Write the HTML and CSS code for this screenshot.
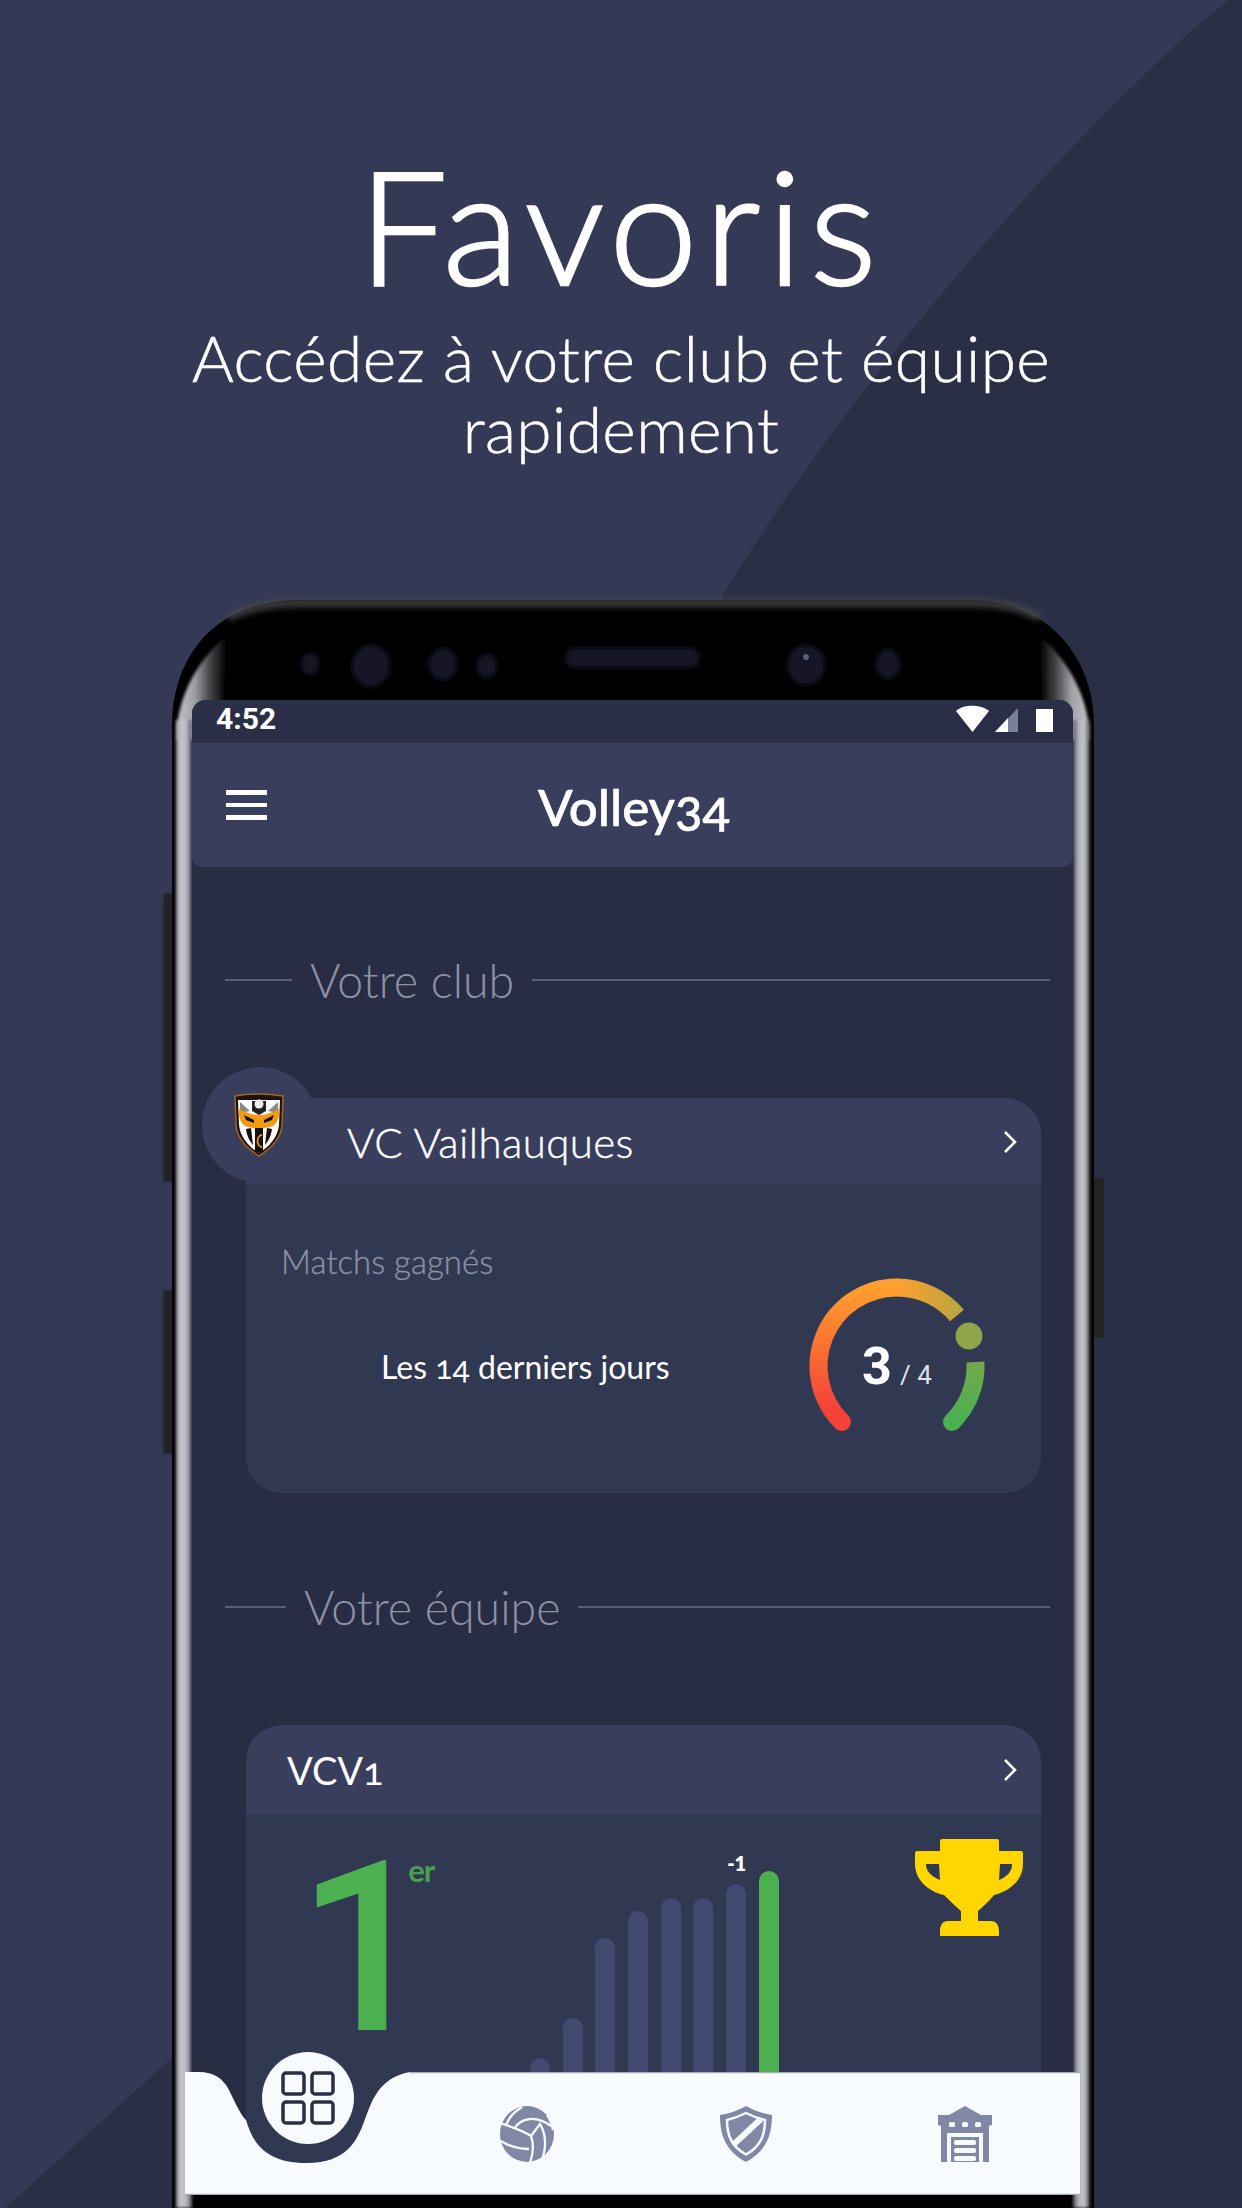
FILE: index.html
```html
<!DOCTYPE html>
<html lang="fr">
<head>
<meta charset="utf-8">
<title>Favoris</title>
<link rel="stylesheet" href="styles.css">
</head>
<body>
<div class="page">
  <svg class="backdrop" viewBox="0 0 1242 2208" aria-hidden="true">
    <path class="backdrop-dark" d="M1228 0C1110 95 880 340 725 591L172 2058L5 2208H1242V0Z"/>
  </svg>

  <header class="hero">
    <h1 class="hero-title">Favoris</h1>
    <p class="hero-sub">Accédez à votre club et équipe<br>rapidement</p>
  </header>

  <div class="phone">
    <svg class="phone-frame" viewBox="160 590 950 1618" aria-hidden="true">
      <defs>
        <filter id="soft" x="-20%" y="-5%" width="140%" height="110%"><feGaussianBlur stdDeviation="1.6"/></filter>
        <filter id="softer" x="-20%" y="-20%" width="140%" height="140%"><feGaussianBlur stdDeviation="2.5"/></filter>
        <filter id="band" x="-5%" y="-100%" width="110%" height="300%"><feGaussianBlur stdDeviation="3"/></filter>
        <linearGradient id="silver-l" gradientUnits="userSpaceOnUse" x1="176" y1="0" x2="192" y2="0">
          <stop offset="0" stop-color="#8d8d96"/><stop offset=".3" stop-color="#c6c6cc"/><stop offset=".65" stop-color="#b8b8c0"/><stop offset="1" stop-color="#4d5164"/>
        </linearGradient>
        <linearGradient id="silver-r" gradientUnits="userSpaceOnUse" x1="1073" y1="0" x2="1090" y2="0">
          <stop offset="0" stop-color="#4d5164"/><stop offset=".35" stop-color="#b8b8c2"/><stop offset=".7" stop-color="#c2c2ca"/><stop offset="1" stop-color="#2c2c33"/>
        </linearGradient>
        <linearGradient id="wedge-l" gradientUnits="userSpaceOnUse" x1="180" y1="0" x2="226" y2="0">
          <stop offset="0" stop-color="#bcbcc4"/><stop offset=".3" stop-color="#a2a2aa"/><stop offset=".65" stop-color="#45454a"/><stop offset="1" stop-color="#000"/>
        </linearGradient>
        <linearGradient id="wedge-r" gradientUnits="userSpaceOnUse" x1="1040" y1="0" x2="1086" y2="0">
          <stop offset="0" stop-color="#000"/><stop offset=".35" stop-color="#45454a"/><stop offset=".7" stop-color="#a2a2aa"/><stop offset="1" stop-color="#bcbcc4"/>
        </linearGradient>
      </defs>
      <rect class="side-key" x="163" y="893" width="12" height="289" rx="3" filter="url(#soft)"/>
      <rect class="side-key" x="163" y="1290" width="12" height="164" rx="3" filter="url(#soft)"/>
      <rect class="side-key" x="1090" y="1178" width="14" height="160" rx="3"/>
      <path class="shell" d="M172 2208V725C172 660 212 600 300 600H970C1050 600 1094 660 1094 725V2208Z"/>
      <path class="shell-band" filter="url(#band)" d="M228 618C248 607 270 603 300 603H970C1000 603 1022 607 1040 618"/>
      <path fill="url(#wedge-l)" filter="url(#soft)" d="M177 730C179 690 205 645 245 624C228 650 222 680 224 705V740H177Z"/>
      <path fill="url(#wedge-r)" filter="url(#soft)" d="M1089 730C1087 690 1060 645 1022 624C1038 650 1044 680 1042 705V740H1089Z"/>
      <path fill="url(#silver-l)" filter="url(#soft)" d="M176 2208V720H192V2208Z"/>
      <path fill="url(#silver-r)" filter="url(#soft)" d="M1090 2208V720H1073V2208Z"/>
      <g class="sensors" filter="url(#softer)">
        <ellipse cx="310" cy="664" rx="9" ry="11"/>
        <ellipse cx="371" cy="666" rx="19" ry="21"/>
        <ellipse cx="443" cy="664" rx="14" ry="16"/>
        <ellipse cx="487" cy="666" rx="10" ry="12"/>
        <rect x="565" y="648" width="135" height="20" rx="10"/>
        <ellipse cx="806" cy="665" rx="19" ry="20"/>
        <ellipse cx="888" cy="664" rx="12" ry="15"/>
      </g>
      <circle cx="806" cy="657" r="3" fill="#59607a"/>
    </svg>

    <div class="screen">
      <div class="status-bar">
        <span class="status-time">4:52</span>
        <svg class="status-icons" viewBox="0 0 100 28" aria-hidden="true">
          <path class="st-white" d="M3 6C10-1 28-1 36 6L19.500 27Z"/>
          <path class="st-dim" d="M65 3V27H42Z"/>
          <path class="st-white" d="M55 13V27H42Z"/>
          <path class="st-white" d="M83 4H100V27H83Z"/>
        </svg>
      </div>

      <div class="app-bar">
        <span class="burger"><i></i><i></i><i></i></span>
        <span class="app-title">Volley<span class="onum">34</span></span>
      </div>

      <main class="content">
        <div class="section-head section-head--club"><span class="rule rule--short"></span><h2>Votre club</h2><span class="rule"></span></div>

        <section class="card">
          <div class="avatar">
            <svg class="club-logo" viewBox="0 0 50 64" aria-hidden="true">
              <path fill="#1a1310" stroke="#a8641f" stroke-width="1.500" d="M1 3Q25 -1 49 3L48 32C47 46 36 56 25 63C14 56 3 46 2 32Z"/>
              <path fill="#fff" d="M4 7H46L45 32C44 44 35 54 25 60C15 54 6 44 5 32Z"/>
              <path fill="#8a8a8a" d="M6 9L16 18L6 20ZM44 9L34 18L44 20Z"/>
              <path fill="#222" d="M18 8H32V18L25 22L18 18Z"/>
              <circle cx="25" cy="11" r="4.500" fill="#eee"/>
              <path fill="#f39a12" d="M5 16C12 19 17 22 25 22C33 22 38 19 45 16C46 26 42 33 36 34L25 36L14 34C8 33 4 26 5 16Z"/>
              <path fill="#111" d="M10 22L20 27L20 30L12 27ZM40 22L30 27L30 30L38 27Z"/>
              <path fill="#111" d="M12 36L17 35L19 52C15 47 13 43 12 36ZM38 36L33 35L31 52C35 47 37 43 38 36Z"/>
              <path fill="#111" d="M21 35H29V58L25 60L21 58Z"/>
              <path fill="none" stroke="#e88f18" stroke-width="1.800" d="M28 42A4.500 6 0 1 0 28 54"/>
            </svg>
          </div>
          <div class="card-head card-head--club">
            <h3>VC Vailhauques</h3>
            <svg class="chevron" viewBox="0 0 14 24" aria-hidden="true"><path d="M2 2L12 12L2 22"/></svg>
          </div>
          <div class="club-body">
            <p class="club-label">Matchs gagnés</p>
            <div class="club-row">
              <span class="club-period">Les <span class="onum">14</span> derniers jours</span>
              <svg class="gauge" viewBox="0 0 200 178" role="img" aria-label="3 sur 4">
                <defs>
                  <linearGradient id="g-left" gradientUnits="userSpaceOnUse" x1="0" y1="130" x2="0" y2="10">
                    <stop offset="0" stop-color="#f44336"/><stop offset="1" stop-color="#ff9f2e"/>
                  </linearGradient>
                  <linearGradient id="g-top" gradientUnits="userSpaceOnUse" x1="100" y1="0" x2="160" y2="0">
                    <stop offset="0" stop-color="#ff9f2e"/><stop offset="1" stop-color="#bda63e"/>
                  </linearGradient>
                  <linearGradient id="g-right" gradientUnits="userSpaceOnUse" x1="0" y1="85" x2="0" y2="140">
                    <stop offset="0" stop-color="#74a94c"/><stop offset="1" stop-color="#4caf50"/>
                  </linearGradient>
                </defs>
                <path class="arc arc--round" stroke="url(#g-left)" d="M45 145A78.500 78.500 0 0 1 100 10.500"/>
                <path class="arc" stroke="url(#g-top)" d="M100 10.500A78.500 78.500 0 0 1 160 38.500"/>
                <path class="arc" stroke="url(#g-right)" d="M178.500 85A78.500 78.500 0 0 1 155 145"/>
                <circle cx="155" cy="145" r="9" fill="#4caf50"/>
                <circle cx="172" cy="59" r="13.500" fill="#8ea34a"/>
                <text class="gauge-main" x="65" y="107">3</text>
                <text class="gauge-sub" x="103" y="107">/ 4</text>
              </svg>
            </div>
          </div>
        </section>

        <div class="section-head section-head--team"><span class="rule rule--shorter"></span><h2>Votre équipe</h2><span class="rule"></span></div>

        <section class="card card--team">
          <div class="card-head card-head--team">
            <h3>VCV<span class="onum onum--one">1</span></h3>
            <svg class="chevron" viewBox="0 0 14 24" aria-hidden="true"><path d="M2 2L12 12L2 22"/></svg>
          </div>
          <div class="team-body">
            <div class="rank"><span class="rank-num">1</span><span class="rank-suffix">er</span></div>
            <div class="bars">
              <span class="bar" style="height:42px"></span>
              <span class="bar" style="height:82px"></span>
              <span class="bar" style="height:162px"></span>
              <span class="bar" style="height:189px"></span>
              <span class="bar" style="height:202px"></span>
              <span class="bar" style="height:202px"></span>
              <span class="bar" style="height:216px"><b class="bar-tag">-1</b></span>
              <span class="bar bar--now" style="height:229px"></span>
            </div>
            <svg class="trophy" viewBox="0 0 108 98" aria-hidden="true">
              <path fill-rule="evenodd" d="M25 2Q25 0 27 0H82Q84 0 84 2V12H106Q108 12 108 14V25C108 40 96 52 79 56C76 60 72 64 63 72V82H76C81 82 84 86 84 92V97H25V92C25 86 28 82 33 82H46V72C37 64 33 60 29 56C12 52 0 40 0 25V14Q0 12 2 12H25ZM11 25V26C11 32 17 38 25 41L24 25ZM97 25H85L84 41C92 38 97 32 97 26Z"/>
            </svg>
          </div>
        </section>
      </main>
    </div>

    <nav class="tabbar">
      <svg class="tabbar-shape" viewBox="0 0 895 123" preserveAspectRatio="none" aria-hidden="true">
        <path d="M0 0H14C28 0 38 6 44 18C50 30 55 42 61 48C67 68 78 91 122 91C162 91 172 68 179 50C186 32 192 6 225 0H895V123H0Z"/>
        <path class="tabbar-edge" d="M225 .5H895M0 122.500H895"/>
      </svg>
      <div class="tab tab--active">
        <span class="tab-disc">
          <svg class="tab-grid" viewBox="0 0 54 54" aria-hidden="true">
            <rect x="2" y="2" width="21" height="21" rx="3"/><rect x="31" y="2" width="21" height="21" rx="3"/>
            <rect x="2" y="31" width="21" height="21" rx="3"/><rect x="31" y="31" width="21" height="21" rx="3"/>
          </svg>
        </span>
      </div>
      <div class="tab">
        <svg class="tab-icon" viewBox="0 0 54 56" aria-hidden="true">
          <ellipse class="i-fill" cx="27" cy="28" rx="27" ry="28"/>
          <g class="i-seam">
            <path d="M0 17C12 21 22 24 31 30"/>
            <path d="M1 35C10 41 20 43 29 43"/>
            <path d="M31 30C34 38 33 48 30 57"/>
            <path d="M31 30C34 26 37 22 40 18C46 28 47 42 41 56"/>
            <path d="M14 23C20 13 34 8 51 20"/>
            <path d="M6 19C10 10 14 6 22 1"/>
            <path d="M47 9C50 13 52 18 53 24"/>
          </g>
        </svg>
      </div>
      <div class="tab">
        <svg class="tab-icon" viewBox="0 0 54 56" aria-hidden="true">
          <path class="i-fill" d="M27 0Q39 7 53 9C53 30 47 45 27 56C7 45 1 30 1 9Q15 7 27 0Z"/>
          <path class="i-line" d="M27 7Q37 12 46 14C46 30 41 41 27 48.500C13 41 8 30 8 14Q17 12 27 7Z"/>
          <path class="i-line i-line--wide" d="M42 13L14 39"/>
        </svg>
      </div>
      <div class="tab">
        <svg class="tab-icon" viewBox="0 0 54 56" aria-hidden="true">
          <path class="i-fill" d="M27 0L43 9H54V19L51 20V56H3V20L0 19V9H11Z"/>
          <g class="i-white">
            <rect x="11" y="16" width="6" height="5" rx="1.500"/><rect x="24" y="16" width="6" height="5" rx="1.500"/><rect x="37" y="16" width="6" height="5" rx="1.500"/>
            <path d="M9 27H45V56H41V31H13V56H9Z"/>
            <rect x="16" y="34" width="22" height="5" rx="2"/><rect x="16" y="42" width="22" height="5" rx="2"/><rect x="16" y="50" width="22" height="5" rx="2"/>
          </g>
        </svg>
      </div>
    </nav>
  </div>
</div>
</body>
</html>
```
FILE: styles.css
```css
* { box-sizing: border-box; }
html, body { margin: 0; padding: 0; }
body { background: #343a56; font-family: "Lato", "Open Sans", sans-serif; color: #fff; }

.page { position: relative; width: 1242px; height: 2208px; overflow: hidden; background: #343a56; }
.backdrop { position: absolute; inset: 0; width: 1242px; height: 2208px; }
.backdrop-dark { fill: #2a2f45; }

.hero { position: relative; height: 597px; padding-top: 134px; text-align: center; }
.hero-title { margin: 0; font-size: 158px; line-height: 180px; font-weight: 300; letter-spacing: 7px; -webkit-text-stroke: 2.5px #fff; }
.hero-sub { margin: 8px 0 0; font-size: 64px; line-height: 71px; font-weight: 300; letter-spacing: .4px; -webkit-text-stroke: .5px #fff; }

.phone { position: relative; width: 919px; height: 1611px; margin-left: 172px; padding: 103px 18px 13px 20px; }
.phone-frame { position: absolute; left: -12px; top: -7px; width: 950px; height: 1618px; }
.side-key { fill: #232325; }
.shell { fill: #000; }
.shell-band { fill: none; stroke: #46464a; stroke-width: 7; }
.sensors { fill: #151926; }

.screen { position: relative; height: 1495px; overflow: hidden; background: #282d43; border-radius: 14px 14px 0 0; display: flex; flex-direction: column; }

.status-bar { flex: none; height: 43px; background: #2a2f47; display: flex; align-items: center; justify-content: space-between; padding: 0 20px 0 24px; }
.status-time { font: 700 30px/1 "Roboto", sans-serif; margin-bottom: 6px; }
.status-icons { width: 100px; height: 28px; margin-bottom: 6px; }
.st-white { fill: #fff; }
.st-dim { fill: #7b8097; }

.app-bar { flex: none; height: 124px; background: #383e5c; border-radius: 0 0 10px 10px; display: flex; align-items: center; padding-left: 34px; position: relative; }
.burger { display: flex; flex-direction: column; gap: 8px; width: 41px; }
.burger i { display: block; height: 4.500px; background: #fff; }
.app-title { flex: 1; text-align: center; font-size: 51px; font-weight: 500; margin-right: 72px; margin-top: 2px; -webkit-text-stroke: .6px #fff; }
.onum { font-feature-settings: "onum"; font-variant-numeric: oldstyle-nums; }

.content { flex: 1; padding: 83px 32px 0 33px; }
.section-head { display: flex; align-items: center; gap: 18px; height: 60px; }
.section-head h2 { margin: 0; font-size: 46.500px; line-height: 60px; font-weight: 300; color: #8d92a6; white-space: nowrap; }
.section-head--club { margin-bottom: 88px; margin-right: -9px; }
.section-head--team { margin-top: 84px; margin-bottom: 88px; margin-right: -9px; }
.rule { flex: 1; height: 2px; background: #5a5f76; }
.rule--short { flex: none; width: 67px; }
.rule--shorter { flex: none; width: 61px; }

.card { position: relative; margin-left: 21px; border-radius: 36px; background: #313852; }
.card--team { height: 640px; overflow: hidden; }
.card-head { background: #383e5c; border-radius: 36px 36px 0 0; display: flex; align-items: center; justify-content: space-between; padding-right: 24px; }
.card-head h3 { margin: 0; font-size: 38px; font-weight: 400; }
.card-head--club { height: 87px; padding-left: 101px; position: relative; }
.card-head--club h3 { font-size: 42px; letter-spacing: .4px; font-weight: 300; -webkit-text-stroke: .4px #fff; }
.card-head--team { height: 89px; padding-left: 41px; }
.chevron { width: 14px; height: 24px; fill: none; stroke: #fff; stroke-width: 2.500; }

.avatar { position: absolute; z-index: 1; left: -44px; top: -31px; width: 116px; height: 116px; border-radius: 50%; background: #383e5c; display: flex; align-items: center; justify-content: center; padding: 0 2px 0 0; }
.club-logo { width: 50px; height: 64px; }

.club-body { height: 308px; padding-top: 62px; }
.club-label { margin: 0; padding-left: 35px; font-size: 33px; line-height: 28px; font-weight: 300; color: #8d92a6; -webkit-text-stroke: .3px #8d92a6; margin-bottom: 2px; }
.club-row { display: flex; align-items: center; padding: 0 44px 0 135px; justify-content: space-between; }
.club-period { font-size: 32px; white-space: nowrap; }
.gauge { width: 200px; height: 178px; flex: none; }
.arc { fill: none; stroke-width: 18; }
.arc--round { stroke-linecap: round; }
.gauge-main { font: 700 52px "Roboto", sans-serif; fill: #fff; }
.gauge-sub { font: 400 26px "Roboto", sans-serif; fill: #dfe1e8; }

.team-body { display: flex; align-items: flex-start; height: 551px; }
.rank { flex: none; width: 284px; display: flex; align-items: flex-start; padding-left: 51px; }
.rank-num { flex: none; letter-spacing: -24px; font: 500 238px/1 "Roboto", sans-serif; color: #4caf50; margin-top: 16px; }
.rank-suffix { font-size: 31px; line-height: 40px; font-weight: 700; letter-spacing: -1px; color: #46a04f; margin-top: 36px; }
.bars { flex: none; width: 249px; height: 286px; display: flex; align-items: flex-end; gap: 12.700px; }
.bar { position: relative; width: 20px; background: #414a6e; border-radius: 10px 10px 0 0; }
.bar--now { background: #4caf50; }
.bar-tag { position: absolute; left: 1px; top: -31px; font: 800 20px/1 "Lato", sans-serif; color: #fff; }
.trophy { flex: none; width: 108px; height: 98px; margin: 25px 18px 0 auto; fill: #ffd600; }

.tabbar { position: absolute; left: 13px; top: 1475px; width: 895px; height: 123px; display: grid; grid-template-columns: repeat(4, 219px); padding-left: 13px; }
.tabbar-shape { position: absolute; inset: 0; width: 895px; height: 123px; fill: #f7fbff; }
.tabbar-edge { fill: none; stroke: #a9adba; stroke-width: 1.500; }
.tab { position: relative; display: flex; justify-content: center; align-items: flex-start; padding-top: 34px; }
.tab--active { padding-top: 0; }
.tab-disc { width: 92px; height: 92px; margin-top: -20px; border-radius: 50%; background: #f7fbff; display: flex; align-items: center; justify-content: center; }
.tab-grid { width: 54px; height: 54px; fill: none; stroke: #2a2f47; stroke-width: 3.500; }
.tab-icon { width: 54px; height: 56px; }
.i-fill { fill: #8088a6; }
.i-seam { fill: none; stroke: #f7fbff; stroke-width: 2.300; }
.i-line { fill: none; stroke: #f7fbff; stroke-width: 2.500; }
.i-line--wide { stroke-width: 6; }
.i-white { fill: #f7fbff; }
```
